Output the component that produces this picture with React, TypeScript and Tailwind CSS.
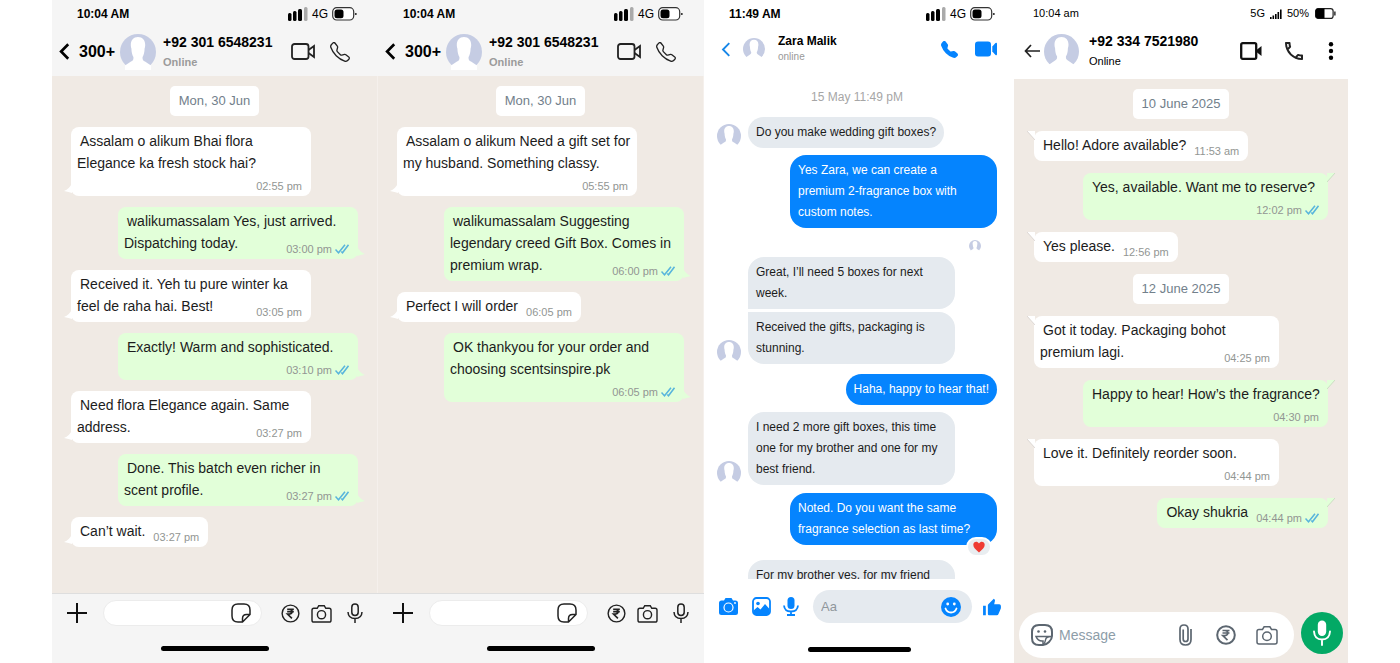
import React from "react";
import { BsTelephone, BsTelephoneFill } from "react-icons/bs";
import { IoMdThumbsUp } from "react-icons/io";
import { MdOutlineCall } from "react-icons/md";

type Message = {
  lines: string[];
  time: string;
  mine?: boolean;
  read?: boolean;
  // inline: time sits beside the text, stack: time gets its own row
  layout?: "inline" | "stack";
};

type DateMark = { date: string };

const floraChat: Message[] = [
  { lines: ["Assalam o alikum Bhai flora", "Elegance ka fresh stock hai?"], time: "02:55 pm", layout: "stack" },
  { lines: ["walikumassalam Yes, just arrived.", "Dispatching today."], time: "03:00 pm", mine: true, read: true },
  { lines: ["Received it. Yeh tu pure winter ka", "feel de raha hai. Best!"], time: "03:05 pm" },
  { lines: ["Exactly! Warm and sophisticated."], time: "03:10 pm", mine: true, read: true, layout: "stack" },
  { lines: ["Need flora Elegance again. Same", "address."], time: "03:27 pm" },
  { lines: ["Done. This batch even richer in", "scent profile."], time: "03:27 pm", mine: true, read: true },
  { lines: ["Can’t wait."], time: "03:27 pm", layout: "inline" },
];

const giftChat: Message[] = [
  { lines: ["Assalam o alikum Need a gift set for", "my husband. Something classy."], time: "05:55 pm", layout: "stack" },
  {
    lines: ["walikumassalam Suggesting", "legendary creed Gift Box. Comes in", "premium wrap."],
    time: "06:00 pm",
    mine: true,
    read: true,
  },
  { lines: ["Perfect I will order"], time: "06:05 pm", layout: "inline" },
  { lines: ["OK thankyou for your order and", "choosing scentsinspire.pk"], time: "06:05 pm", mine: true, read: true, layout: "stack" },
];

const adoreChat: (Message | DateMark)[] = [
  { date: "10 June 2025" },
  { lines: ["Hello! Adore available?"], time: "11:53 am", layout: "inline" },
  { lines: ["Yes, available. Want me to reserve?"], time: "12:02 pm", mine: true, read: true, layout: "stack" },
  { lines: ["Yes please."], time: "12:56 pm", layout: "inline" },
  { date: "12 June 2025" },
  { lines: ["Got it today. Packaging bohot", "premium lagi."], time: "04:25 pm" },
  { lines: ["Happy to hear! How’s the fragrance?"], time: "04:30 pm", mine: true, layout: "stack" },
  { lines: ["Love it. Definitely reorder soon."], time: "04:44 pm", layout: "stack" },
  { lines: ["Okay shukria"], time: "04:44 pm", mine: true, read: true, layout: "inline" },
];

type IconProps = { className?: string };

const Avatar: React.FC<IconProps> = ({ className }) => (
  <svg viewBox="0 0 36 36" className={className} aria-hidden="true">
    <circle cx="18" cy="18" r="18" fill="#c5cce3" />
    <path
      d="M18 3c-4.500 0-7.200 3.200-7.200 7.800 0 1.600.2 2.600.6 3.800.1 4 .9 6.600 2 8.400.3 2.400-.5 3.600-2.400 4.500L5 31.500V37h26v-5.500l-6-4c-1.900-.9-2.700-2.100-2.400-4.500 1.100-1.800 1.900-4.400 2-8.400.4-1.200.6-2.200.6-3.800C25.200 6.200 22.500 3 18 3z"
      fill="#fff"
    />
  </svg>
);

const Battery: React.FC = () => (
  <svg viewBox="0 0 25 14" className="h-[14px] w-[25px]" aria-hidden="true">
    <rect x="0.700" y="0.700" width="21" height="12.300" rx="4" fill="#fff" stroke="#333" strokeWidth="1.200" />
    <rect x="2.500" y="2.500" width="9" height="8.700" rx="2.500" fill="#000" />
    <circle cx="23.800" cy="7" r="1" fill="#222" />
  </svg>
);

const Signal: React.FC = () => (
  <svg viewBox="0 0 20 14" className="h-[14px] w-5" aria-hidden="true">
    <rect x="0" y="6" width="3.500" height="8" rx="1.500" />
    <rect x="5" y="4" width="3.500" height="10" rx="1.500" />
    <rect x="10" y="2" width="4" height="12" rx="1.500" />
    <rect x="16" y="0" width="3.500" height="14" rx="1.500" fill="#aaa" />
  </svg>
);

const Ticks: React.FC = () => (
  <svg viewBox="0 0 14 10" className="h-[10px] w-[14px]" fill="none" stroke="#58b5dc" strokeWidth="1.500" aria-hidden="true">
    <path d="M0.500 5.500 3.500 8.800 10 .8M6.300 7.500 7.500 8.800 13.500.8" />
  </svg>
);

const Chevron: React.FC<IconProps> = ({ className }) => (
  <svg viewBox="0 0 10 16" className={className} fill="none" stroke="currentColor" aria-hidden="true">
    <path d="M8.500 1.200 1.800 8l6.700 6.800" />
  </svg>
);

const CameraIcon: React.FC<IconProps> = ({ className }) => (
  <svg viewBox="0 0 22 20" className={className} fill="none" stroke="currentColor" strokeWidth="1.500" aria-hidden="true">
    <path d="M3 4.500h3.500l1.600-2.700h5.800l1.600 2.700H19q2 0 2 2V17q0 2-2 2H3q-2 0-2-2V6.500q0-2 2-2z" />
    <circle cx="11" cy="11.300" r="4.300" />
  </svg>
);

const RupeeIcon: React.FC<IconProps> = ({ className }) => (
  <svg viewBox="0 0 20 20" className={className} fill="none" stroke="currentColor" strokeWidth="1.500" aria-hidden="true">
    <circle cx="10" cy="10" r="8.800" />
    <path d="M6.500 5.500h7M6.500 8h7M6.500 5.500h2.500q2.800.3 2.800 2.500T9 10.600H6.800l4.700 4.600" strokeWidth="1.700" />
  </svg>
);

const StickerIcon: React.FC<IconProps> = ({ className }) => (
  <svg viewBox="0 0 20 20" className={className} fill="none" stroke="currentColor" strokeWidth="1.500" aria-hidden="true">
    <path d="M11.500 19H7q-6 0-6-6V7q0-6 6-6h6q6 0 6 6v4.500zM11.500 19v-3.500q0-4 4-4H19" />
  </svg>
);

const MicIcon: React.FC<IconProps> = ({ className }) => (
  <svg viewBox="0 0 16 20" className={className} fill="none" stroke="currentColor" strokeWidth="1.500" aria-hidden="true">
    <rect x="4.800" y="1" width="6.400" height="11.500" rx="3.200" />
    <path d="M1 9q.3 6.500 7 6.500T15 9M8 15.500V20" />
  </svg>
);

const StatusBar: React.FC<{ time: string; className: string }> = ({ time, className }) => (
  <div className={`flex h-[27px] shrink-0 items-center ${className}`}>
    <span className="flex-1 font-bold">{time}</span>
    <Signal />
    <span className="ml-1 mr-1 text-[12px]">4G</span>
    <Battery />
  </div>
);

const DateChip: React.FC<{ date: string }> = ({ date }) => (
  <div className="self-center rounded-[5px] bg-white px-[9px] text-[13px] leading-[30px] text-[#72808b]">{date}</div>
);

const Tail: React.FC<{ mine?: boolean; top?: boolean }> = ({ mine, top }) => {
  const place = top ? "top-0" : "bottom-[3px]";
  const side = mine ? "-right-[7px]" : "-left-[7px]";
  return (
    <svg
      viewBox="0 0 8 10"
      className={`absolute h-[10px] w-2 ${place} ${side} ${mine ? "fill-[#e2ffd9]" : "fill-white"}`}
      aria-hidden="true"
    >
      {top && !mine && <path d="M0 0h8v9z" />}
      {top && mine && <path d="M8 0H0v9z" />}
      {!top && !mine && <path d="M8 0v10Q5 9 0 8 5.500 6 8 0z" />}
      {!top && mine && <path d="M0 0v10Q3 9 8 8 2.500 6 0 0z" />}
      {top && !mine && <path d="M0 0 8 9" stroke="#d5d1cd" strokeWidth="0.800" />}
      {top && mine && <path d="M8 0 0 9" stroke="#c4d8bd" strokeWidth="0.800" />}
    </svg>
  );
};

const Bubble: React.FC<{ message: Message; android?: boolean }> = ({ message, android }) => {
  const { lines, time, mine, read, layout } = message;
  const inline = layout === "inline";
  const color = mine ? "self-end bg-[#e2ffd9]" : "self-start bg-white";
  const width = inline ? "flex items-end gap-2" : android ? "w-[245px]" : "w-[240px]";
  const timeOffset = inline ? "" : layout === "stack" ? "mt-1" : "-mt-[13px]";

  return (
    <div className={`relative rounded-[8px] pb-[2px] pl-[6px] pr-[9px] pt-[3px] ${color} ${width}`}>
      <Tail mine={mine} top={android} />
      <p className={`whitespace-nowrap text-[14px] leading-[22px] text-[#1c1c1c] ${inline ? "mb-[3px]" : ""}`}>
        {lines.map((line, i) => (
          <span key={line} className={`block ${i === 0 ? "pl-[3px]" : ""}`}>
            {line}
          </span>
        ))}
      </p>
      <div className={`flex items-center justify-end gap-[3px] text-[11px] leading-4 text-[#929693] ${timeOffset}`}>
        <span>{time}</span>
        {read && <Ticks />}
      </div>
    </div>
  );
};

const IosChat: React.FC<{ messages: Message[] }> = ({ messages }) => (
  <section className="flex min-w-0 flex-col bg-[#f5f5f5]">
    <StatusBar time="10:04 AM" className="pl-[25px] pr-[21px] text-[12px]" />
    <header className="flex h-[49px] shrink-0 items-center pl-[7px] pr-7">
      <button aria-label="Back" className="flex items-center">
        <Chevron className="h-[17px] w-[11px] stroke-[2.500]" />
        <span className="ml-[9px] text-[16px] font-bold">300+</span>
      </button>
      <Avatar className="ml-[5px] size-9" />
      <div className="ml-[7px] flex-1 whitespace-nowrap font-bold leading-5">
        <h2 className="text-[14px]">+92 301 6548231</h2>
        <p className="text-[11px] text-[#9b9b9b]">Online</p>
      </div>
      <button aria-label="Video call">
        <svg viewBox="0 0 24 17" className="h-[17px] w-6" fill="none" stroke="#222" strokeWidth="1.800">
          <rect x="1" y="1" width="16.500" height="15" rx="2.500" />
          <path d="M17.500 7 23 3v11l-5.500-4" />
        </svg>
      </button>
      <button aria-label="Call" className="ml-[15px]">
        <BsTelephone className="size-5 text-[#222]" />
      </button>
    </header>

    <div className="flex flex-1 flex-col gap-[11px] border-r border-[#f5f0ec] bg-[#f0eae4] pl-[19px] pr-[19px] pt-[10px]">
      <DateChip date="Mon, 30 Jun" />
      {messages.map((message) => (
        <Bubble key={message.lines[0]} message={message} />
      ))}
    </div>

    <footer className="shrink-0 border-t border-[#dedede] pb-3">
      <div className="flex h-[38px] items-center pl-[14px] pr-[15px]">
        <button aria-label="Attach">
          <svg viewBox="0 0 22 22" className="size-[22px]" stroke="#111" strokeWidth="2">
            <path d="M11 1v20M1 11h20" />
          </svg>
        </button>
        <div className="ml-[15px] flex h-[26px] min-w-0 flex-1 items-center rounded-full border border-[#ececec] bg-white pr-[10px]">
          <input aria-label="Message" className="min-w-0 flex-1 bg-transparent pl-3 text-[14px] outline-none" />
          <button aria-label="Stickers">
            <StickerIcon className="size-[20px] text-[#222]" />
          </button>
        </div>
        <button aria-label="Payment" className="ml-[19px]">
          <RupeeIcon className="size-[19px] text-[#222]" />
        </button>
        <button aria-label="Camera" className="ml-[11px]">
          <CameraIcon className="h-[19px] w-[21px] text-[#222]" />
        </button>
        <button aria-label="Voice message" className="ml-[15px]">
          <MicIcon className="h-5 w-4 text-[#222]" />
        </button>
      </div>
      <div className="mx-auto mt-[14px] h-[5px] w-[108px] rounded-full bg-black" />
    </footer>
  </section>
);

type MessengerRow = {
  text: string;
  mine?: boolean;
  avatar?: boolean;
  space: string;
  shape: string;
  reaction?: boolean;
  seen?: boolean;
};

const zaraChat: MessengerRow[] = [
  { text: "Do you make wedding gift boxes?", avatar: true, space: "mt-[10px]", shape: "rounded-[16px]" },
  { text: "Yes Zara, we can create a\npremium 2-fragrance box with\ncustom notes.", mine: true, seen: true, space: "mt-[7px]", shape: "w-[207px] rounded-[16px]" },
  { text: "Great, I’ll need 5 boxes for next\nweek.", space: "mt-[5px]", shape: "w-[207px] rounded-[16px] rounded-bl-none" },
  { text: "Received the gifts, packaging is\nstunning.", avatar: true, space: "mt-[3px]", shape: "w-[207px] rounded-[16px] rounded-tl-none" },
  { text: "Haha, happy to hear that!", mine: true, space: "mt-[10px]", shape: "rounded-[16px]" },
  { text: "I need 2 more gift boxes, this time\none for my brother and one for my\nbest friend.", avatar: true, space: "mt-[7px]", shape: "w-[207px] rounded-[16px]" },
  { text: "Noted. Do you want the same\nfragrance selection as last time?", mine: true, reaction: true, space: "mt-2", shape: "w-[207px] rounded-[16px]" },
  { text: "For my brother yes, for my friend", space: "mt-[15px]", shape: "w-[207px] rounded-t-[16px]" },
];

const MessengerBubble: React.FC<{ row: MessengerRow }> = ({ row }) => (
  <div className={`flex shrink-0 flex-col ${row.space}`}>
    <div className={`flex items-end ${row.mine ? "justify-end" : ""}`}>
      {!row.mine && <div className="mr-[7px] w-6">{row.avatar && <Avatar className="size-6" />}</div>}
      <div
        className={`relative whitespace-pre px-2 py-[5px] text-[12px] leading-[21px] ${row.shape} ${
          row.mine ? "bg-[#0584fe] text-white" : "bg-[#e5eaef] text-[#1c1c1c]"
        }`}
      >
        {row.text}
        {row.reaction && (
          <span className="absolute -bottom-3 right-[5px] flex h-5 w-[26px] items-center justify-center rounded-full border-2 border-white bg-[#e9edf0]">
            <svg viewBox="0 0 12 12" className="size-3" role="img" aria-label="Heart">
              <path d="M6 11.500C2.500 8.500.3 6.500.3 3.800.3.500 4.300-.4 6 2.500 7.700-.4 11.700.5 11.700 3.800c0 2.700-2.200 4.700-5.700 7.700z" fill="#ef3b32" />
            </svg>
          </span>
        )}
      </div>
    </div>
    {row.seen && <Avatar className="mr-4 mt-3 size-3 self-end" />}
  </div>
);

const MessengerChat: React.FC = () => (
  <section className="flex min-w-0 flex-col overflow-hidden bg-white">
    <StatusBar time="11:49 AM" className="pl-[25px] pr-[19px] text-[12px]" />
    <header className="flex h-[44px] shrink-0 items-center pl-[17px] pr-[17px]">
      <button aria-label="Back">
        <Chevron className="h-[15px] w-[10px] stroke-2 text-[#1787e8]" />
      </button>
      <Avatar className="ml-3 size-[22px]" />
      <div className="ml-[13px] flex-1 whitespace-nowrap">
        <h2 className="text-[12px] font-bold leading-4">Zara Malik</h2>
        <p className="text-[10px] leading-4 text-[#999]">online</p>
      </div>
      <button aria-label="Call">
        <BsTelephoneFill className="size-[17px] text-[#0584fe]" />
      </button>
      <button aria-label="Video call" className="ml-[17px]">
        <svg viewBox="0 0 22 16" className="h-4 w-[22px] fill-[#0584fe]">
          <rect y="0.500" width="16" height="15" rx="3" />
          <path d="M17.300 5.500 20.500 2q1.500-.8 1.500 1v10q0 1.800-1.500 1l-3.200-3.500z" />
        </svg>
      </button>
    </header>

    <div className="flex min-h-0 flex-1 flex-col overflow-hidden pl-[13px] pr-[17px] pt-4">
      <p className="shrink-0 text-center text-[12px] leading-5 text-[#a6a6a6]">15 May 11:49 pM</p>
      {zaraChat.map((row) => (
        <MessengerBubble key={row.text} row={row} />
      ))}
    </div>

    <footer className="shrink-0 pb-[11px] pt-[11px] text-[#0584fe]">
      <div className="flex items-center pl-[15px] pr-[11px]">
        <button aria-label="Camera">
          <svg viewBox="0 0 19 17" className="h-[17px] w-[19px]">
            <path d="M2.500 2.500H5l1.500-2.500h6L14 2.500h2.500Q19 2.500 19 5v9.500q0 2.500-2.500 2.500h-14Q0 17 0 14.500V5Q0 2.500 2.500 2.500z" fill="currentColor" />
            <circle cx="9.500" cy="9.500" r="4.500" fill="none" stroke="#fff" strokeWidth="1.200" />
            <circle cx="16" cy="5" r="0.900" fill="#fff" />
          </svg>
        </button>
        <button aria-label="Photos" className="ml-[14px]">
          <svg viewBox="0 0 19 19" className="size-[19px]">
            <rect x="1" y="1" width="17" height="17" rx="3.500" fill="none" stroke="currentColor" strokeWidth="1.800" />
            <circle cx="6" cy="6.500" r="1.800" fill="currentColor" />
            <path d="M1.500 13.500 5.500 10l3 2.500L13 7l4.500 5v3q0 2.500-2.500 2.500H4q-2.500 0-2.500-2.500z" fill="currentColor" />
          </svg>
        </button>
        <button aria-label="Voice message" className="ml-3">
          <svg viewBox="0 0 16 19" className="h-[19px] w-4" fill="none" stroke="currentColor" strokeWidth="1.800">
            <rect x="4.500" y="0" width="7" height="12" rx="3.500" fill="currentColor" stroke="none" />
            <path d="M1 8.500q.5 6 7 6t7-6M8 14.500V18M4 18h8" />
          </svg>
        </button>
        <div className="ml-[14px] flex h-[33px] min-w-0 flex-1 items-center rounded-full bg-[#e5eaef] pl-2 pr-[11px]">
          <input
            aria-label="Message"
            placeholder="Aa"
            className="min-w-0 flex-1 bg-transparent text-[13px] outline-none placeholder:text-[#8f969c]"
          />
          <button aria-label="Emoji">
            <svg viewBox="0 0 20 20" className="size-5">
              <circle cx="10" cy="10" r="10" fill="currentColor" />
              <circle cx="6.700" cy="7" r="1.400" fill="#fff" />
              <circle cx="13.300" cy="7" r="1.400" fill="#fff" />
              <path d="M4.500 11.500q1.500 4 5.500 4t5.500-4" fill="none" stroke="#fff" strokeWidth="1.800" strokeLinecap="round" />
            </svg>
          </button>
        </div>
        <button aria-label="Like" className="ml-[9px]">
          <IoMdThumbsUp className="size-[22px]" />
        </button>
      </div>
      <div className="mx-auto mt-[24px] h-[5px] w-[103px] rounded-full bg-black" />
    </footer>
  </section>
);

const AndroidChat: React.FC = () => (
  <section className="flex min-w-0 flex-col bg-[#f0eae4]">
    <div className="flex h-[27px] shrink-0 items-center bg-white pl-[19px] pr-3 text-[11px]">
      <span className="flex-1">10:04 am</span>
      <span>5G</span>
      <svg viewBox="0 0 12 10" className="ml-[5px] h-[10px] w-3" aria-hidden="true">
        <path d="M0 8h1.600v2H0zM2.500 6.500h1.600V10H2.500zM5 5h1.600v5H5zM7.500 3h1.600v7H7.500zM10 .5h1.600V10H10z" />
      </svg>
      <span className="ml-[5px]">50%</span>
      <svg viewBox="0 0 21 11" className="ml-[6px] h-[11px] w-[21px]" aria-hidden="true">
        <rect x="0.600" y="0.600" width="17.500" height="9.800" rx="2.500" fill="none" stroke="#222" strokeWidth="1.200" />
        <path d="M3 .6h6.500v9.800H3Q.6 10.400.6 8V3Q.6.600 3 .6zM19.300 3.500h1.200v4h-1.200z" />
      </svg>
    </div>
    <header className="flex h-[52px] shrink-0 items-center bg-white pb-1 pl-[10px] pr-[14px]">
      <button aria-label="Back">
        <svg viewBox="0 0 16 14" className="h-[14px] w-4" fill="none" stroke="#222" strokeWidth="1.700">
          <path d="M7 1 1.500 7 7 13M1.500 7H16" />
        </svg>
      </button>
      <Avatar className="ml-1 size-[35px]" />
      <div className="ml-[10px] flex-1 whitespace-nowrap leading-5">
        <h2 className="text-[14px] font-bold">+92 334 7521980</h2>
        <p className="text-[11px]">Online</p>
      </div>
      <button aria-label="Video call">
        <svg viewBox="0 0 22 18" className="h-[18px] w-[22px]">
          <rect x="1.200" y="1.200" width="15" height="15.600" rx="1.500" fill="none" stroke="#111" strokeWidth="2.300" />
          <path d="M16.500 8 21.500 4v10l-5-4z" fill="#111" />
        </svg>
      </button>
      <button aria-label="Call" className="ml-5">
        <MdOutlineCall className="size-6 text-[#222]" />
      </button>
      <button aria-label="More" className="ml-[22px]">
        <svg viewBox="0 0 6 18" className="h-[18px] w-[6px]">
          <circle cx="3" cy="2.200" r="2.200" />
          <circle cx="3" cy="9" r="2.200" />
          <circle cx="3" cy="15.800" r="2.200" />
        </svg>
      </button>
    </header>

    <div className="flex flex-1 flex-col gap-3 px-5 pt-[10px]">
      {adoreChat.map((item) =>
        "date" in item ? (
          <DateChip key={item.date} date={item.date} />
        ) : (
          <Bubble key={item.lines[0]} message={item} android />
        )
      )}
    </div>

    <footer className="flex shrink-0 items-start gap-[7px] pb-[5px] pl-[5px] pr-[5px]">
      <div className="flex h-[46px] min-w-0 flex-1 items-center rounded-full bg-white pl-3 pr-4 text-[#5c6670]">
        <button aria-label="Stickers">
          <svg viewBox="0 0 22 22" className="size-[22px]" fill="none" stroke="currentColor" strokeWidth="2">
            <path d="M12 21H8q-7 0-7-7V8q0-7 7-7h6q7 0 7 7v4q0 3-3 6t-6 3z" />
            <path d="M5 12.500h15q-5 0-5.500 3.500t-2.500 4.500v-3.500q-5 .5-7-4.500z" strokeWidth="1.500" />
            <circle cx="7.500" cy="7.500" r="1.300" fill="currentColor" stroke="none" />
            <circle cx="14" cy="7.500" r="1.300" fill="currentColor" stroke="none" />
          </svg>
        </button>
        <input
          aria-label="Message"
          placeholder="Message"
          className="ml-[6px] min-w-0 flex-1 bg-transparent text-[14px] outline-none placeholder:text-[#8d9da8]"
        />
        <button aria-label="Attach">
          <svg viewBox="0 0 13 22" className="h-[22px] w-[13px]" fill="none" stroke="currentColor" strokeWidth="1.700">
            <path d="M12 5v10.500q0 5.500-5.500 5.500T1 15.500V5q0-4 4-4t4 4v10q0 2.500-2.400 2.500T4.200 15V5.500" />
          </svg>
        </button>
        <button aria-label="Payment" className="ml-6">
          <RupeeIcon className="size-5 stroke-2" />
        </button>
        <button aria-label="Camera" className="ml-[20px]">
          <CameraIcon className="h-5 w-[22px]" />
        </button>
      </div>
      <button aria-label="Voice message" className="flex size-[42px] items-center justify-center rounded-full bg-[#03a965] text-white">
        <svg viewBox="0 0 18 26" className="h-[26px] w-[18px]" fill="none" stroke="currentColor" strokeWidth="1.900">
          <rect x="4.800" y="0.500" width="8.400" height="15.500" rx="4.200" fill="currentColor" stroke="none" />
          <path d="M1 11.500q.5 8 8 8t8-8M9 19.500V25" strokeLinecap="round" />
        </svg>
      </button>
    </footer>
  </section>
);

const App: React.FC = () => {
  return (
    <main className="h-screen min-h-[600px] bg-white px-[52px] font-['Liberation_Sans',Arial,sans-serif] text-black">
      <div className="grid h-full grid-cols-[326fr_326fr_310fr_334fr]">
        <IosChat messages={floraChat} />
        <IosChat messages={giftChat} />
        <MessengerChat />
        <AndroidChat />
      </div>
    </main>
  );
};

export default App;
